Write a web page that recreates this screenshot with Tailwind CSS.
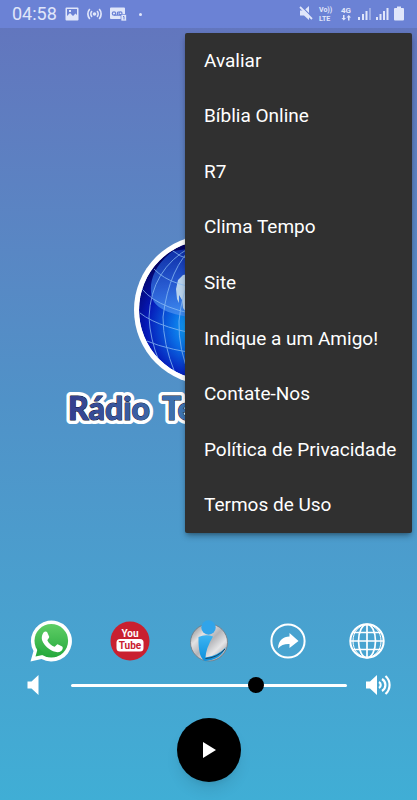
<!DOCTYPE html>
<html lang="pt-BR">
<head>
    <meta charset="UTF-8">
    <meta name="viewport" content="width=device-width, initial-scale=1.0">
    <title>Rádio</title>
    <script src="https://cdn.jsdelivr.net/npm/@tailwindcss/browser@4"></script>
</head>
<body class="relative min-h-screen flex flex-col bg-linear-to-b from-[#6374bd] via-[#5092c8] to-[#40aed5] font-[Roboto,sans-serif] text-white">

    <!-- Status bar -->
    <header class="h-7 flex items-center justify-between px-3 bg-[#6b82d5] text-[#e0e6fa]">
        <div class="flex items-center gap-2">
            <span class="text-lg leading-7">04:58</span>
            <svg class="w-[14px] h-[14px]" viewBox="0 0 14 14" fill="currentColor">
                <path fill-rule="evenodd" d="M1.5 0.5h11a1 1 0 0 1 1 1v11a1 1 0 0 1-1 1h-11a1 1 0 0 1-1-1v-11a1 1 0 0 1 1-1zM2 2v7l3-3 3 3 2.500-2.500L12 8V2zM4 3h2v2H4z"/>
            </svg>
            <svg class="w-[15px] h-[14px]" viewBox="0 0 15 14" fill="none" stroke="currentColor" stroke-width="1.700">
                <circle cx="7.500" cy="7" r="1.800" fill="currentColor" stroke="none"/>
                <path d="M5 4.200a4 4 0 0 0 0 5.600M10 4.200a4 4 0 0 1 0 5.600M2.800 2a7.500 7.500 0 0 0 0 10M12.200 2a7.500 7.500 0 0 1 0 10"/>
            </svg>
            <svg class="w-[17px] h-[14px]" viewBox="0 0 17 14">
                <path d="M1 0.500h13a1 1 0 0 1 1 1V12H1a1 1 0 0 1-1-1V1.500a1 1 0 0 1 1-1z" fill="currentColor"/>
                <g fill="none" stroke="#6b82d5" stroke-width="1.200">
                    <circle cx="4" cy="6.500" r="1.700"/>
                    <path d="M4 8.200h7M7.500 8V5M7.500 5h2"/>
                    <circle cx="10.500" cy="6.300" r="1.500"/>
                </g>
                <rect x="11" y="7.500" width="5.500" height="6.500" fill="currentColor" stroke="#6b82d5" stroke-width="0.700"/>
                <path d="M13 9.500h1v3" fill="none" stroke="#6b82d5"/>
            </svg>
            <span class="w-[3px] h-[3px] ml-1 rounded-full bg-[#e0e6fa]"></span>
        </div>
        <svg class="w-[106px] h-[18px]" viewBox="300 5 106 18" fill="currentColor" font-family="Roboto, sans-serif" font-weight="700">
            <path d="M301 10.500h4l5-4.500v14l-5-4.500h-4z"/>
            <path d="M302 6l12 12" stroke="#6b82d5" stroke-width="1.200"/>
            <path d="M301 7l12 12" stroke="currentColor" stroke-width="1.800"/>
            <text x="320" y="12" font-size="7">Vo))</text>
            <text x="320" y="21" font-size="7">LTE</text>
            <text x="342" y="13" font-size="8">4G</text>
            <path d="M344 15h1.500v3h1.500l-2.200 2.500-2.300-2.500H344zM349 20.500h1.500v-3h1.500l-2.200-2.500-2.300 2.500H349z"/>
            <path d="M359 17h2v3h-2zM363 14h2v6h-2zM366.500 11h2v9h-2zM377 17h2v3h-2zM380.500 14h2v6h-2zM384 11h2v9h-2zM387.500 8h2v12h-2z"/>
            <path d="M370 8h2v12h-2z" opacity="0.400"/>
            <path d="M396 8h2V6.500h4V8h2a1 1 0 0 1 1 1v10.500a1 1 0 0 1-1 1h-8a1 1 0 0 1-1-1V9a1 1 0 0 1 1-1z"/>
        </svg>
    </header>

    <!-- Logo -->
    <main class="flex-1 flex items-center justify-center pt-4">
        <svg class="w-[288px] h-[194px]" viewBox="64 236 288 194" role="img" aria-label="Logo">
            <defs>
                <radialGradient id="globe" gradientUnits="userSpaceOnUse" cx="198" cy="328" r="75">
                    <stop offset="0" stop-color="#18c4fa"/>
                    <stop offset="0.350" stop-color="#0b70e6"/>
                    <stop offset="0.700" stop-color="#0619b8"/>
                    <stop offset="1" stop-color="#040466"/>
                </radialGradient>
                <linearGradient id="shine" x1="0" y1="0" x2="0" y2="1">
                    <stop offset="0" stop-color="#0b2fb0"/>
                    <stop offset="1" stop-color="#4b95f5"/>
                </linearGradient>
                <linearGradient id="title" gradientUnits="userSpaceOnUse" x1="69" y1="0" x2="195" y2="0">
                    <stop offset="0" stop-color="#34408f"/>
                    <stop offset="1" stop-color="#3f7cb8"/>
                </linearGradient>
                <clipPath id="globeClip"><circle cx="208" cy="311" r="70"/></clipPath>
            </defs>
            <circle cx="208" cy="311" r="75" fill="#fff"/>
            <g clip-path="url(#globeClip)">
                <circle cx="208" cy="311" r="70" fill="url(#globe)"/>
                <path d="M172 252C150 268 146 290 153 303C164 317 186 318 230 322V244z" fill="url(#shine)" opacity="0.850"/>
                <path d="M188 275l-6 1-5 5-2 9 1 10 2 4v-8l3 5 1 8 6 8 8 4V272zM183 257l7-2v4z" fill="#b9d2ec"/>
                <g fill="none" stroke="#8fc0f5" stroke-width="1" opacity="0.750">
                    <path d="M172 252q14 12 40 9M153 270q18 19 60 20M141 290q18 22 72 28M139 314q20 16 74 24M146 342q20 9 66 15"/>
                    <path d="M190 248Q150 270 148 318Q149 340 158 362M194 246Q168 268 162 318Q162 345 174 374M212 246Q183 272 178 322Q177 350 190 380"/>
                </g>
            </g>
            <g font-family="Lato, sans-serif" font-size="32" font-weight="900" stroke-linejoin="round">
                <g fill="#fff" stroke="#fff" stroke-width="8" aria-hidden="true">
                    <text x="67" y="421">Rádio</text>
                    <text x="161" y="421">Te</text>
                </g>
                <g fill="url(#title)" stroke="#0b1030" stroke-width="1" paint-order="stroke">
                    <text x="67" y="421">Rádio</text>
                    <text x="161" y="421">Te</text>
                </g>
            </g>
        </svg>
    </main>

    <!-- Player -->
    <footer class="flex flex-col pb-[18px]">
        <nav class="grid grid-cols-5 justify-items-center items-center h-[42px] px-[11px]">
            <a href="#" aria-label="WhatsApp">
                <svg class="w-[42px] h-[42px]" viewBox="0 0 42 42">
                    <defs>
                        <linearGradient id="wa" x1="0" y1="0" x2="0" y2="1">
                            <stop offset="0" stop-color="#5fce66"/>
                            <stop offset="1" stop-color="#25a83c"/>
                        </linearGradient>
                    </defs>
                    <path d="M0.500 41.500L3.500 31A20.500 20.500 0 1 1 11.500 39z" fill="#fff"/>
                    <circle cx="21.300" cy="20.800" r="16.800" fill="url(#wa)"/>
                    <path d="M5.500 36.500l2.500-9 7 7z" fill="#2bab40"/>
                    <path d="M13.500 12.500c1-1.300 3-1.500 3.700-.3l2 4.600c.4 1-1.700 2.700-1.800 3.600 1.300 3 4 5.200 7 6.300 1 .2 2.200-2.600 3.200-2.400l4.600 2.200c1.200.8.4 3.500-1 4.500-3.500 2.500-8.300.6-12-1.900-3-2.200-6.200-5.500-7.200-9-.6-3 0-5.500 1.500-7.600z" fill="#fff"/>
                </svg>
            </a>
            <a href="#" aria-label="YouTube">
                <svg class="w-10 h-10" viewBox="0 0 40 40" font-family="Roboto, sans-serif" font-weight="700" text-anchor="middle">
                    <circle cx="20" cy="20" r="19.500" fill="#c9202f"/>
                    <text x="20" y="16" font-size="10" fill="#fff">You</text>
                    <rect x="6.500" y="18" width="27" height="12.500" rx="3.500" fill="#fff"/>
                    <text x="20" y="28" font-size="10" fill="#c9202f">Tube</text>
                </svg>
            </a>
            <a href="#" aria-label="Instituto">
                <svg class="w-10 h-[42px]" viewBox="0 0 40 42">
                    <defs>
                        <linearGradient id="metal" x1="0" y1="0" x2="1" y2="1">
                            <stop offset="0" stop-color="#777"/>
                            <stop offset="0.300" stop-color="#e2e2e4"/>
                            <stop offset="0.500" stop-color="#b4b4b8"/>
                            <stop offset="0.700" stop-color="#e6e6e8"/>
                            <stop offset="1" stop-color="#77777c"/>
                        </linearGradient>
                        <linearGradient id="blue" x1="0" y1="0" x2="0" y2="1">
                            <stop offset="0" stop-color="#3db4f2"/>
                            <stop offset="1" stop-color="#0b8fdc"/>
                        </linearGradient>
                    </defs>
                    <circle cx="20" cy="22.500" r="18.500" fill="url(#metal)" stroke="#77797e" stroke-width="0.800"/>
                    <path d="M9.500 17q7-3 14.500-.5Q17 28 16.500 37.500Q29 36 37 27Q32 40 16 41Q9 38 9.500 17z" fill="url(#blue)"/>
                    <path d="M16.500 38.500Q28 38 36 29" fill="none" stroke="#20435c" stroke-width="1"/>
                    <circle cx="19.500" cy="7.500" r="7.200" fill="#31a4ea"/>
                </svg>
            </a>
            <a href="#" aria-label="Compartilhar">
                <svg class="w-9 h-9" viewBox="0 0 36 36">
                    <circle cx="18" cy="18" r="16.600" fill="none" stroke="#fff" stroke-width="2"/>
                    <path d="M8 25.500C8.500 17 13 13.700 19.500 13.500V10l9 8-9 7v-4C14.500 20.800 11 22 8 25.500z" fill="#fff"/>
                </svg>
            </a>
            <a href="#" aria-label="Site">
                <svg class="w-9 h-9" viewBox="0 0 36 36" fill="none" stroke="#fff" stroke-width="1.700">
                    <circle cx="18" cy="18" r="16.700" stroke-width="2"/>
                    <ellipse cx="18" cy="18" rx="8.500" ry="16.700"/>
                    <ellipse cx="18" cy="18" rx="14" ry="16.700" stroke-width="1"/>
                    <path d="M18 1v34M1 18h34M3.500 9.500h29M3.500 26.500h29"/>
                </svg>
            </a>
        </nav>

        <div class="mt-[11px] h-6 flex items-center pl-[27px] pr-[26px]">
            <button type="button" aria-label="Diminuir volume" class="w-11 shrink-0">
                <svg class="w-[12px] h-5" viewBox="0 0 12 20" fill="#fff"><path d="M0.500 6.500h4L11.500 0v20l-7-6.500h-4z"/></svg>
            </button>
            <input type="range" min="0" max="100" value="68" aria-label="Volume"
                   class="flex-1 min-w-0 h-4 appearance-none bg-transparent [&::-webkit-slider-runnable-track]:h-[3px] [&::-webkit-slider-runnable-track]:rounded-full [&::-webkit-slider-runnable-track]:bg-white [&::-webkit-slider-thumb]:appearance-none [&::-webkit-slider-thumb]:w-4 [&::-webkit-slider-thumb]:h-4 [&::-webkit-slider-thumb]:-mt-[7px] [&::-webkit-slider-thumb]:rounded-full [&::-webkit-slider-thumb]:bg-black">
            <button type="button" aria-label="Aumentar volume" class="w-11 shrink-0 flex justify-end">
                <svg class="w-[25px] h-5" viewBox="0 0 25 20">
                    <path d="M0 6.500h4L11 0v20l-7-6.500H0z" fill="#fff"/>
                    <path d="M13 7a3.500 3.500 0 0 1 0 6M16 4a7 7 0 0 1 0 12M19.500 1a12 12 0 0 1 0 18" fill="none" stroke="#fff" stroke-width="2.200"/>
                </svg>
            </button>
        </div>

        <button type="button" aria-label="Tocar" class="mt-[21px] mx-auto w-16 h-16 rounded-full bg-black shadow-lg flex items-center justify-center">
            <svg class="w-[14px] h-4" viewBox="0 0 14 16" fill="#fff"><path d="M1 0l13 8-13 8z"/></svg>
        </button>
    </footer>

    <!-- Menu -->
    <ul class="absolute top-[33px] right-[5px] w-[227px] h-[500px] grid auto-rows-fr rounded-xs bg-[#303030] shadow-md shadow-black/30 text-[19px] leading-6">
        <li class="flex"><a href="#" class="flex-1 flex items-center px-[19px]">Avaliar</a></li>
        <li class="flex"><a href="#" class="flex-1 flex items-center px-[19px]">Bíblia Online</a></li>
        <li class="flex"><a href="#" class="flex-1 flex items-center px-[19px]">R7</a></li>
        <li class="flex"><a href="#" class="flex-1 flex items-center px-[19px]">Clima Tempo</a></li>
        <li class="flex"><a href="#" class="flex-1 flex items-center px-[19px]">Site</a></li>
        <li class="flex"><a href="#" class="flex-1 flex items-center px-[19px]">Indique a um Amigo!</a></li>
        <li class="flex"><a href="#" class="flex-1 flex items-center px-[19px]">Contate-Nos</a></li>
        <li class="flex"><a href="#" class="flex-1 flex items-center px-[19px] whitespace-nowrap">Política de Privacidade</a></li>
        <li class="flex"><a href="#" class="flex-1 flex items-center px-[19px]">Termos de Uso</a></li>
    </ul>
</body>
</html>
